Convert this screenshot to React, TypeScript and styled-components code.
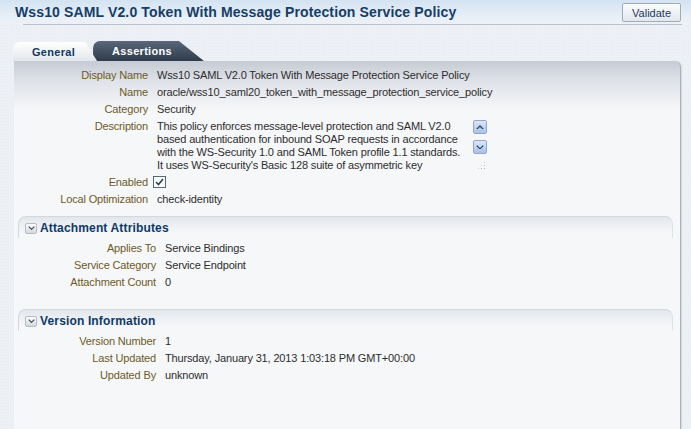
import React, { FC, ReactNode } from 'react';
import styled, { createGlobalStyle } from 'styled-components';

const GlobalStyle = createGlobalStyle`
  html, body {
    margin: 0;
    padding: 0;
    background-color: #edf1f5;
    font-family: 'Liberation Sans', Arial, sans-serif;
    font-size: 11px;
  }
`;

const Page = styled.div`
  display: flex;
  flex-direction: column;
  height: 429px;
  overflow: hidden;
  background-color: #edf1f5;
  background-image: radial-gradient(#e6ebf1 0.6px, transparent 0.7px);
  background-size: 3px 3px;
`;

const Header = styled.header`
  align-items: center;
  background: linear-gradient(#d4e3f2, #e8eff6 70%, #edf1f5);
  box-sizing: border-box;
  display: flex;
  height: 24px;
  justify-content: space-between;
  padding: 0 10px 0 15px;
`;

const Title = styled.h1`
  color: #163d66;
  font-size: 14px;
  font-weight: bold;
  letter-spacing: 0.13px;
  margin: 0;
`;

const Button = styled.button`
  background: linear-gradient(#fbfcfd, #e2e7ee);
  border: 1px solid #a2acb8;
  border-radius: 2px;
  color: #1e3a5f;
  font-family: 'Liberation Sans', Arial, sans-serif;
  font-size: 11px;
  height: 19px;
  margin-top: 1px;
  padding: 0 9px;
`;

const Rule = styled.div`
  border-top: 1px solid #b9c3cf;
  margin: 0 9px 0 23px;
`;

const TabStrip = styled.div`
  display: flex;
  height: 20px;
  margin-top: 16px;
  padding-left: 13px;
`;

const Tab = styled.div<{ $active?: boolean; $slant: number }>`
  align-items: center;
  background: ${(p) =>
    p.$active ? 'linear-gradient(#ffffff, #e3e7ec)' : 'linear-gradient(#58677b, #2e3b4b)'};
  border-top-left-radius: 7px;
  box-sizing: border-box;
  clip-path: polygon(0 0, calc(100% - ${(p) => p.$slant}px) 0, 100% 100%, 0 100%);
  color: ${(p) => (p.$active ? '#0f3860' : '#ffffff')};
  display: flex;
  font-weight: bold;
  letter-spacing: 0.3px;
  margin-left: ${(p) => (p.$active ? '0' : '-4px')};
  margin-top: ${(p) => (p.$active ? '1px' : '0')};
  padding: 0 ${(p) => (p.$active ? p.$slant + 10 : p.$slant + 7)}px 0
    ${(p) => (p.$active ? '19px' : '19px')};
  position: relative;
  z-index: ${(p) => (p.$active ? 2 : 1)};
`;

const Panel = styled.main`
  background: linear-gradient(#c6cbd4 0px, #dfe2e8 20px, #f0f2f5 42px, #f6f7f9 50px);
  border-right: 1px solid #aab2bd;
  border-top-right-radius: 6px;
  box-shadow: 1px 0 1px #d3d8de;
  flex: 1;
  margin: 0 10px 0 14px;
  padding-top: 8px;
`;

const Fields = styled.div<{ $label: number }>`
  display: grid;
  grid-template-columns: ${(p) => p.$label}px 1fr;
  column-gap: 9px;
  row-gap: 4px;
  letter-spacing: -0.15px;
  line-height: 13px;
`;

const Label = styled.div`
  color: #6d5a1f;
  text-align: right;
`;

const Value = styled.div`
  color: #2d2d2d;
  display: flex;
  align-items: flex-start;
  white-space: nowrap;
`;

const DescText = styled.div`
  height: 52px;
  overflow: hidden;
  width: 313px;
`;

const ScrollCol = styled.div`
  display: flex;
  flex-direction: column;
  gap: 6px;
  margin-left: 3px;
`;

const ScrollButton = styled.div`
  align-items: center;
  background: linear-gradient(#dce7f7, #a9c0e6);
  border: 1px solid #8ea5cc;
  border-radius: 2px;
  display: flex;
  height: 12px;
  justify-content: center;
  width: 12px;
`;

const Grip = styled.div`
  height: 9px;
  margin-left: 4px;
  margin-top: 1px;
  width: 9px;
  background-image: radial-gradient(#a6adb6 0.8px, transparent 1px);
  background-size: 3px 3px;
  clip-path: polygon(100% 0, 100% 100%, 0 100%);
`;

const Check = styled.div`
  align-items: center;
  background: #fbfcfd;
  border: 1px solid #56677a;
  box-sizing: border-box;
  display: flex;
  height: 12px;
  justify-content: center;
  margin-left: -4px;
  width: 13px;
`;

const Section = styled.section`
  margin-top: 10px;
  padding-bottom: 10px;
`;

const SectionHead = styled.div`
  align-items: center;
  background: linear-gradient(#e3e7ec, #f6f7f9 16px);
  border-left: 1px solid #d3d8de;
  border-top: 1px solid #d3d8de;
  border-right: 1px solid #dfe3e8;
  border-top-left-radius: 8px;
  border-top-right-radius: 8px;
  display: flex;
  gap: 3px;
  height: 20px;
  margin: 0 7px 0 4px;
  padding: 1px 0 0 6px;
`;

const Disclose = styled.div`
  align-items: center;
  background: linear-gradient(#fdfdfe, #d3d9e0);
  border: 1px solid #b3bcc7;
  border-radius: 2px;
  box-sizing: border-box;
  display: flex;
  height: 11px;
  justify-content: center;
  width: 12px;
`;

const SectionTitle = styled.h2`
  color: #0d3a66;
  font-size: 12px;
  font-weight: bold;
  letter-spacing: 0.15px;
  margin: 0;
`;

const SectionBody = styled.div`
  padding-top: 4px;
`;

const Chevron: FC<{ up?: boolean; size?: number; color?: string }> = ({ up, size = 8, color = '#23466f' }) => (
  <svg width={size} height={size * 0.6} viewBox="0 0 10 6">
    <path
      d={up ? 'M1 5.2 L5 1.2 L9 5.2' : 'M1 0.8 L5 4.8 L9 0.8'}
      fill="none"
      stroke={color}
      strokeWidth="1.6"
    />
  </svg>
);

interface Field {
  label: string;
  value: ReactNode;
}

const general: Field[] = [
  { label: 'Display Name', value: 'Wss10 SAML V2.0 Token With Message Protection Service Policy' },
  { label: 'Name', value: 'oracle/wss10_saml20_token_with_message_protection_service_policy' },
  { label: 'Category', value: 'Security' },
];

const attachment: Field[] = [
  { label: 'Applies To', value: 'Service Bindings' },
  { label: 'Service Category', value: 'Service Endpoint' },
  { label: 'Attachment Count', value: '0' },
];

const version: Field[] = [
  { label: 'Version Number', value: '1' },
  { label: 'Last Updated', value: 'Thursday, January 31, 2013 1:03:18 PM GMT+00:00' },
  { label: 'Updated By', value: 'unknown' },
];

const description = [
  'This policy enforces message-level protection and SAML V2.0',
  'based authentication for inbound SOAP requests in accordance',
  'with the WS-Security 1.0 and SAML Token profile 1.1 standards.',
  "It uses WS-Security's Basic 128 suite of asymmetric key",
];

const FieldRows: FC<{ fields: Field[] }> = ({ fields }) => (
  <>
    {fields.map((f) => (
      <React.Fragment key={f.label}>
        <Label>{f.label}</Label>
        <Value>{f.value}</Value>
      </React.Fragment>
    ))}
  </>
);

const Group: FC<{ title: string; fields: Field[] }> = ({ title, fields }) => (
  <Section>
    <SectionHead>
      <Disclose>
        <Chevron size={7} color="#3b4550" />
      </Disclose>
      <SectionTitle>{title}</SectionTitle>
    </SectionHead>
    <SectionBody>
      <Fields $label={142}>
        <FieldRows fields={fields} />
      </Fields>
    </SectionBody>
  </Section>
);

const App: FC = () => (
  <>
    <GlobalStyle />
    <Page>
      <Header>
        <Title>Wss10 SAML V2.0 Token With Message Protection Service Policy</Title>
        <Button>Validate</Button>
      </Header>
      <Rule />
      <TabStrip>
        <Tab $active $slant={12}>
          General
        </Tab>
        <Tab $slant={25}>Assertions</Tab>
      </TabStrip>
      <Panel>
        <Fields $label={134}>
          <FieldRows fields={general} />
          <Label>Description</Label>
          <Value>
            <DescText>
              {description.map((line) => (
                <div key={line}>{line}</div>
              ))}
            </DescText>
            <ScrollCol>
              <ScrollButton>
                <Chevron up />
              </ScrollButton>
              <ScrollButton>
                <Chevron />
              </ScrollButton>
              <Grip />
            </ScrollCol>
          </Value>
          <Label>Enabled</Label>
          <Value>
            <Check>
              <svg width="9" height="8" viewBox="0 0 9 8">
                <path d="M1 4 L3.5 6.5 L8 1" fill="none" stroke="#2c3e52" strokeWidth="1.6" />
              </svg>
            </Check>
          </Value>
          <Label>Local Optimization</Label>
          <Value>check-identity</Value>
        </Fields>
        <Group title="Attachment Attributes" fields={attachment} />
        <Group title="Version Information" fields={version} />
      </Panel>
    </Page>
  </>
);

export default App;
